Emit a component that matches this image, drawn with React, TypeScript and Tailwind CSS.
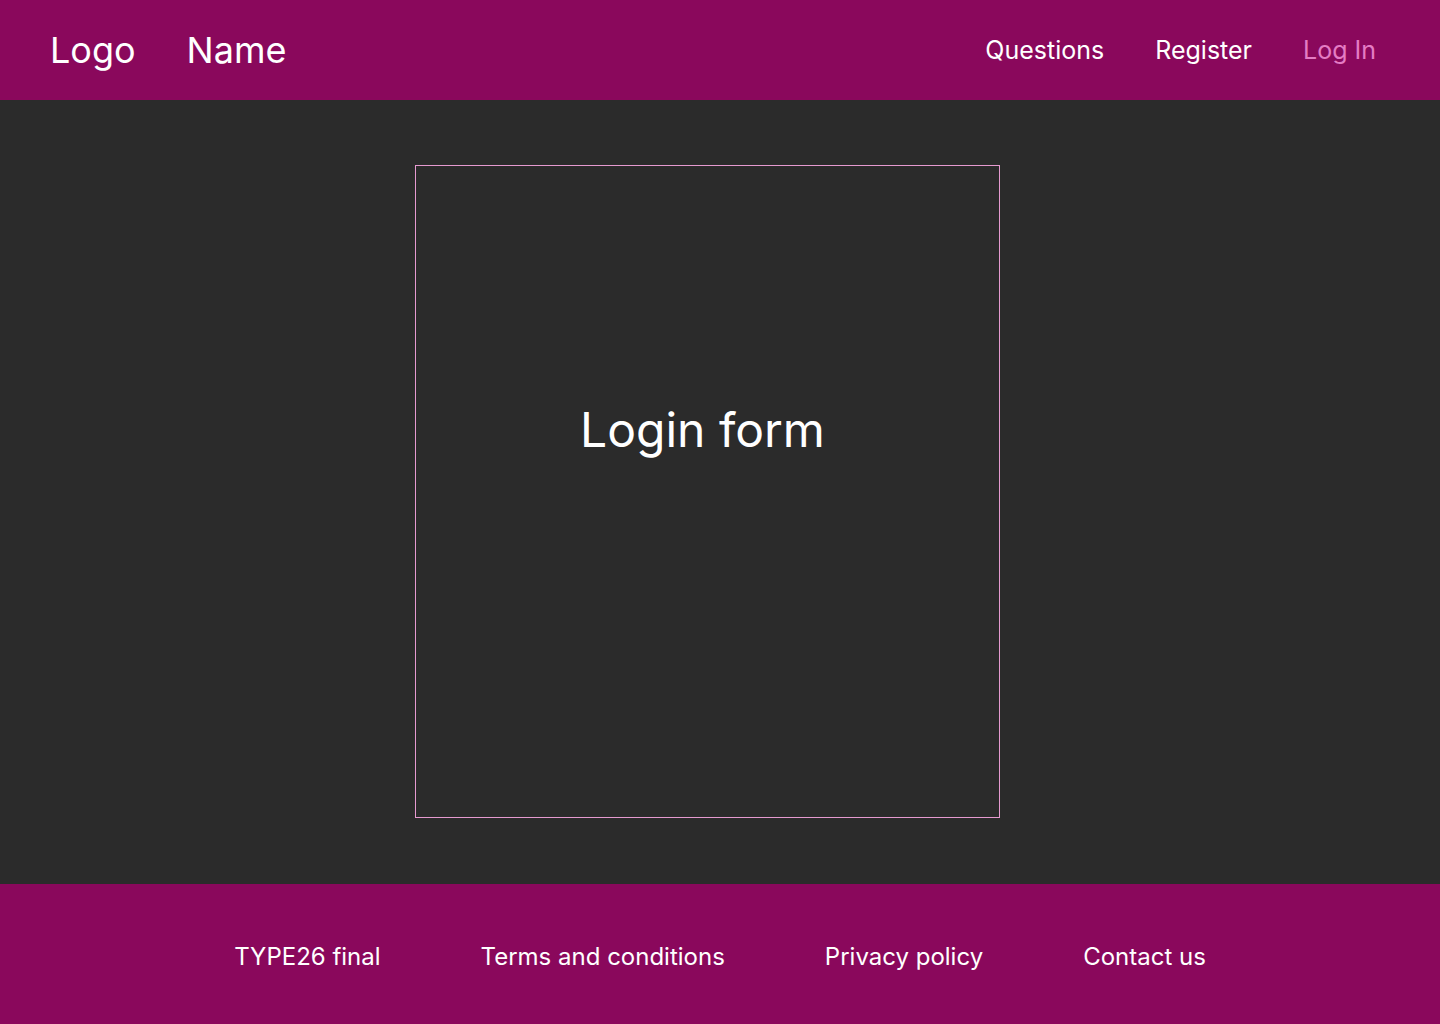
export default function App() {
  return (
    <div className="flex min-h-screen flex-col bg-[#2b2b2b] font-['Inter','Liberation_Sans',sans-serif] text-white">
      <header className="flex h-[100px] items-center justify-between bg-[#8a085c] pl-[50px] pr-[64px]">
        <div className="flex items-center gap-[51px] text-[36px]">
          <span>Logo</span>
          <span>Name</span>
        </div>
        <nav className="flex items-center gap-[51px] pt-[2px] text-[25px]">
          <a href="#">Questions</a>
          <a href="#">Register</a>
          <a href="#" className="text-[#e47cc4]">Log In</a>
        </nav>
      </header>

      <main className="flex h-[784px] justify-center pt-[65px]">
        <div className="mr-[25px] flex h-[653px] w-[585px] justify-center border border-[#e69ad0] pr-[10px] pt-[230px]">
          <h1 className="text-[48px] leading-[68px]">Login form</h1>
        </div>
      </main>

      <footer className="flex h-[140px] items-center justify-center gap-[100px] bg-[#8a085c] pt-[5px] text-[24px]">
        <span>TYPE26 final</span>
        <a href="#">Terms and conditions</a>
        <a href="#">Privacy policy</a>
        <a href="#">Contact us</a>
      </footer>
    </div>
  );
}
